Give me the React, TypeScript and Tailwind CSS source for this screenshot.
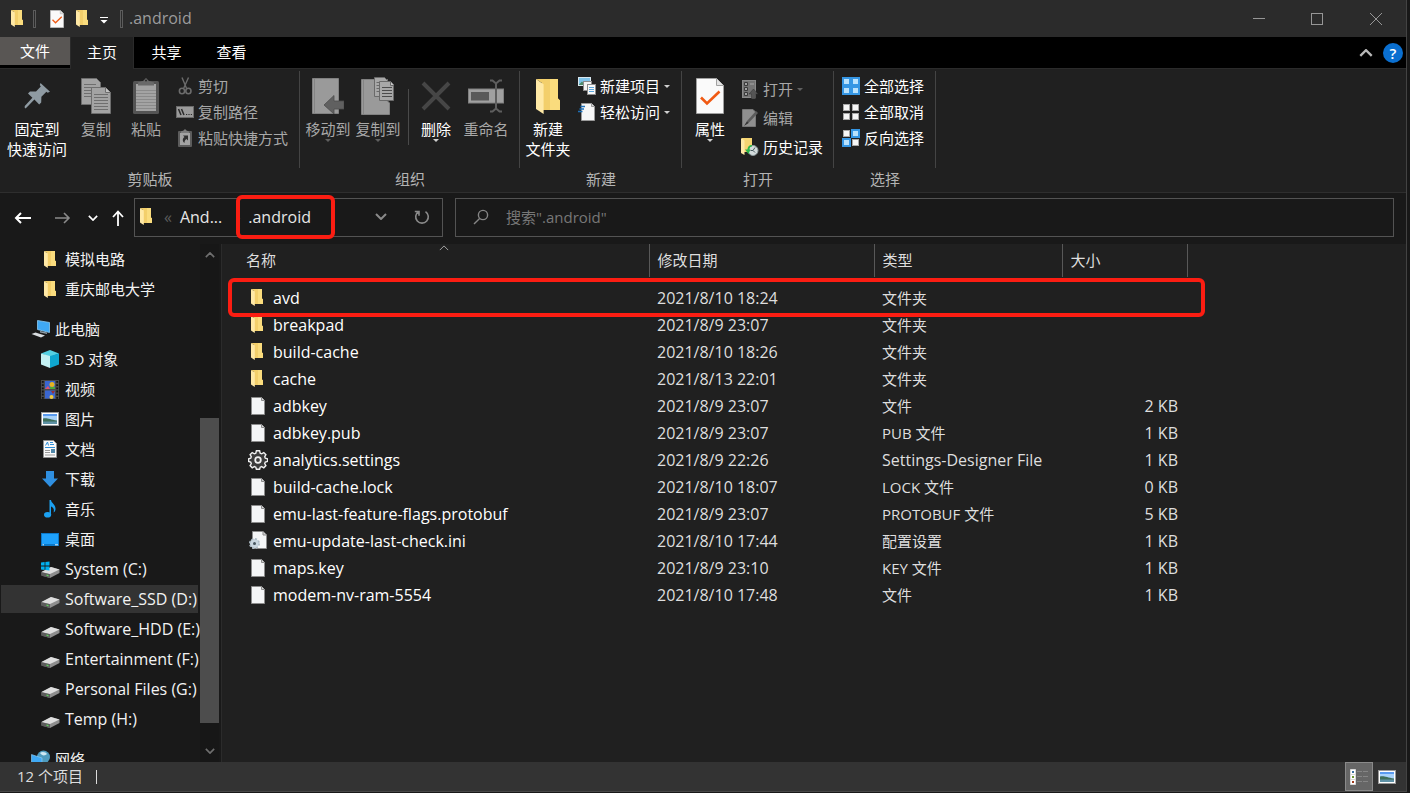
import type { ReactNode } from "react";

type IconProps = { className?: string };

// Latin-only labels are set one step larger than the Chinese ones
const labelSize = (text: string) => (/^[ -~]+$/.test(text) ? "text-[16px]" : "text-[15px]");

/* ---------- icons ---------- */

function FolderIcon({ className = "w-3 h-[17px]" }: IconProps) {
  return (
    <svg viewBox="0 0 12 17" className={className} preserveAspectRatio="none">
      <path d="M0 0H11V9.5L12 10.5V15H3V2Z" fill="#f3cf6b" />
      <path d="M7 0H11V9.5L12 10.5V15H7Z" fill="#fadc7d" />
      <path d="M0 0L3.8 2.5V17L0 14.6Z" fill="#ffe9a6" />
    </svg>
  );
}

function FileIcon({ className = "w-3.5 h-[18px]" }: IconProps) {
  return (
    <svg viewBox="0 0 14 18" className={className}>
      <path d="M0.5 0.5H10.5L13.5 3.5V17.5H0.5Z" fill="#f5f6f7" stroke="#8c8c8c" />
      <path d="M10.5 0.5V3.5H13.5" fill="#d6d6d6" stroke="#8c8c8c" />
    </svg>
  );
}

function GearIcon() {
  return (
    <svg viewBox="0 0 20 20" className="w-5 h-5" fill="none" stroke="#f0f0f0">
      <path
        d="M8.4 0.8h3.2l.6 2.4 1.4.6 2.2-1.2 2.1 2.1-1.2 2.2.6 1.3 2.3.6v2.6l-2.3.7-.6 1.4 1.2 2.1-2.1 2.2-2.2-1.2-1.4.6-.6 2.1H8.4l-.6-2.1-1.4-.6-2.2 1.2L2.100 15.600l1.200-2.100-.6-1.400-2.100-.7V8.800l2.100-.6.6-1.300L2.100 4.700l2.100-2.100 2.200 1.200 1.400-.6Z"
        strokeWidth="1.400"
        fill="#3c3c3c"
      />
      <circle cx="10" cy="10" r="2.800" strokeWidth="1.800" />
    </svg>
  );
}

function IniIcon() {
  return (
    <svg viewBox="0 0 18 19" className="w-[18px] h-[19px]">
      <path d="M3.5 0.5H14L17.5 4V17.5H3.5Z" fill="#f5f6f7" stroke="#8c8c8c" />
      <path d="M14 0.5V4H17.5" fill="#d6d6d6" stroke="#8c8c8c" />
      <circle cx="5.5" cy="12.5" r="4.6" fill="#c9d6df" stroke="#aebcc6" strokeWidth="1.8" strokeDasharray="2 1.6" />
      <circle cx="5.5" cy="12.5" r="3.8" fill="#c9d6df" />
      <circle cx="5.5" cy="12.5" r="1.5" fill="#46545e" />
    </svg>
  );
}

function PropertiesIcon({ className = "w-7 h-9" }: IconProps) {
  return (
    <svg viewBox="0 0 28 36" className={className}>
      <path d="M0.5 0.5H20.5L27.5 7.5V35.5H0.5Z" fill="#fafafa" stroke="#a0a0a0" />
      <path d="M20.5 0.5V7.5H27.5" fill="#e4e4e4" stroke="#a0a0a0" />
      <path d="M5 19.5L11 25.5L23.5 13.5" fill="none" stroke="#f05a14" strokeWidth="2.6" />
    </svg>
  );
}

function PinIcon() {
  return (
    <svg viewBox="0 0 26 26" className="w-[26px] h-[26px]" fill="#8f9ba3">
      <path d="M16.5 0L26 8.8L23.6 9.8L22.4 8.8L17.4 13.8L17.2 19.6L15.2 21.4L10.4 16.6L1.6 25.4L0.6 24.6L0.8 23L8.4 14.8L4 10.6L6 8.6L12 8.6L16.8 3.6L15.8 2Z" />
    </svg>
  );
}

function CopyIcon() {
  return (
    <svg viewBox="0 0 30 36" className="w-[30px] h-9" stroke="#6e6e6e">
      <path d="M0.5 0.5H15.5L19.5 4.5V26.5H0.5Z" fill="#a3a3a3" />
      <path d="M3 6.5H15M3 9.5H15M3 12.5H12M3 15.5H12M3 18.5H12" />
      <path d="M10.5 9.5H24.5L29.5 14.5V35.5H10.5Z" fill="#a3a3a3" />
      <path d="M24.5 9.5V14.5H29.5" fill="#c2c2c2" />
      <path d="M13 16.5H27M13 19.5H27M13 22.5H27M13 25.5H27M13 28.5H27M13 31.5H27" />
    </svg>
  );
}

function PasteIcon() {
  return (
    <svg viewBox="0 0 26 36" className="w-[26px] h-9">
      <rect x="0" y="3" width="26" height="33" rx="1.5" fill="#545454" />
      <rect x="3" y="6" width="20" height="27" fill="#a3a3a3" />
      <path d="M3 12.5H23M3 15.5H23M3 18.5H23M3 21.5H23M3 24.5H23M3 27.5H23M3 30.5H23" stroke="#8a8a8a" />
      <path d="M5 7.5V4.5L10 3L13 0L16 3L21 4.5V7.5Z" fill="#6a6a6a" />
      <circle cx="13" cy="2.6" r="1" fill="#2a2a2a" />
    </svg>
  );
}

function ScissorsIcon() {
  return (
    <svg viewBox="0 0 18 18" className="w-[18px] h-[18px]" fill="none" stroke="#6c6c6c">
      <path d="M6 0.5L10.6 11.5M12.5 0.5L7.6 11.5" strokeWidth="1.4" />
      <ellipse cx="6" cy="14" rx="2.6" ry="2.8" strokeWidth="1.6" />
      <ellipse cx="12.4" cy="14" rx="2.6" ry="2.8" strokeWidth="1.6" />
    </svg>
  );
}

function CopyPathIcon() {
  return (
    <svg viewBox="0 0 18 12" className="w-[18px] h-3">
      <rect x="0.5" y="0.5" width="17" height="11" fill="#9b9b9b" stroke="#6c6c6c" />
      <path d="M2.5 3L5 9M5.5 3L8 9" stroke="#2c2c2c" strokeWidth="1.5" />
      <path d="M10 8.5h1.2M12.4 8.5h1.2M14.8 8.5h1.2" stroke="#2c2c2c" />
    </svg>
  );
}

function PasteShortcutIcon() {
  return (
    <svg viewBox="0 0 14 18" className="w-3.5 h-[18px]">
      <rect y="2" width="14" height="16" rx="1" fill="#5c5c5c" />
      <rect x="2" y="4" width="10" height="12" fill="#a3a3a3" />
      <path d="M3 4V2.5L5.5 1.5L7 0L8.5 1.5L11 2.5V4Z" fill="#7b7b7b" />
      <path d="M5 6.5H10V11.5L8.5 10C7 11 6.5 12 6.5 14C4 12 4.5 9.5 6.5 8Z" fill="#2f2f2f" />
    </svg>
  );
}

function MoveToIcon() {
  return (
    <svg viewBox="0 0 32 36" className="w-8 h-9">
      <path d="M0.5 0.5H26.5V35.5H0.5Z" fill="#9a9a9a" stroke="#818181" />
      <path d="M2.5 1V35" stroke="#858585" />
      <path d="M12 27L22 17.5V23H32V31H22V36Z" fill="#606060" stroke="#4c4c4c" strokeWidth="0.8" />
    </svg>
  );
}

function CopyToIcon() {
  return (
    <svg viewBox="0 0 34 38" className="w-[34px] h-[38px]">
      <path d="M0.5 2.5H26.5V24L28.5 26V37.5H0.5Z" fill="#9a9a9a" stroke="#818181" />
      <path d="M2.5 3V37" stroke="#858585" />
      <g stroke="#6a6a6a">
        <path d="M13.5 0.5H23.5L26.5 3.5V19.5H13.5Z" fill="#a8a8a8" />
        <path d="M15.5 5.5H23M15.5 8.5H23M15.5 11.5H20M15.5 14.5H20" />
        <path d="M18.5 4.5H29.5L32.5 7.5V23.5H18.5Z" fill="#a8a8a8" />
        <path d="M29.5 4.5V8.5H33" fill="#c8c8c8" />
        <path d="M21 10.5H31M21 13.5H31M21 16.5H31M21 19.5H31" stroke="#4c4c4c" />
      </g>
    </svg>
  );
}

function DeleteIcon() {
  return (
    <svg viewBox="0 0 30 30" className="w-[30px] h-[30px]">
      <path d="M2 2L28 28M28 2L2 28" stroke="#464646" strokeWidth="4" />
    </svg>
  );
}

function RenameIcon() {
  return (
    <svg viewBox="0 0 36 34" className="w-9 h-[34px]" fill="none">
      <rect x="0.5" y="10" width="35" height="14" fill="#a0a0a0" stroke="#808080" />
      <rect x="3" y="13" width="18" height="8.5" fill="#595959" />
      <path d="M22 1.5H24.5L28 4.5L31.5 1.5H34M28 4.5V29.5M22 32.5H24.5L28 29.5L31.5 32.5H34" stroke="#5e5e5e" strokeWidth="2" />
    </svg>
  );
}

function NewItemIcon() {
  return (
    <svg viewBox="0 0 18 18" className="w-[18px] h-[18px]">
      <rect x="0.5" y="0.5" width="12" height="8" fill="#7fc3ea" stroke="#d9e8f0" />
      <path d="M1 7.5L4 4.5L6 6.5L9 5V8H1Z" fill="#4d8b6c" />
      <rect x="5.5" y="4.5" width="8" height="9" fill="#f4f4f4" stroke="#8c8c8c" />
      <rect x="9.5" y="7.5" width="8" height="10" fill="#f8f8f8" stroke="#8c8c8c" />
      <path d="M11 10.5H16M11 12.5H16M11 14.5H16" stroke="#5aa6dc" />
    </svg>
  );
}

function EasyAccessIcon() {
  return (
    <svg viewBox="0 0 18 18" className="w-[18px] h-[18px]">
      <path d="M3.5 0.5H13.5L16.5 3.5V17.5H3.5Z" fill="#f6f6f6" stroke="#9a9a9a" />
      <path d="M13.5 0.5V3.5H16.5" fill="#d6d6d6" stroke="#9a9a9a" />
      <path d="M2.5 3.5H7M1.5 6H6M0 8.5H4.5" stroke="#1d6fb8" strokeWidth="1.3" />
    </svg>
  );
}

function OpenIcon() {
  return (
    <svg viewBox="0 0 16 19" className="w-4 h-[19px]">
      <rect x="0.5" y="0.5" width="13" height="17" fill="#757575" stroke="#8a8a8a" />
      <path d="M2.5 2.5H5.5V5.5H2.5ZM2.5 7.5H5.5V10.5H2.5ZM2.5 12.5H5.5V15.5H2.5Z" fill="#a2a2a2" stroke="#3a3a3a" />
      <path d="M8 4H12" stroke="#a8a8a8" />
      <path d="M11.5 9L16 14H13.5V19H9.5V14H7Z" fill="#555" stroke="#333" strokeWidth="0.5" />
    </svg>
  );
}

function EditIcon() {
  return (
    <svg viewBox="0 0 16 18" className="w-4 h-[18px]">
      <path d="M0.5 0.5H11L13.5 3V17.5H0.5Z" fill="#8f8f8f" stroke="#777" />
      <path d="M3 16L5 12L14 2L16 4L6.5 14Z" fill="#5b5b5b" />
      <path d="M2 17L5 12.5L6.5 14Z" fill="#333" />
    </svg>
  );
}

function HistoryIcon() {
  return (
    <svg viewBox="0 0 18 18" className="w-[18px] h-[18px]">
      <path d="M1 0H11V14H1Z" fill="#f6d572" />
      <path d="M0 0L3.5 2.5V17L0 15Z" fill="#ffe9a6" />
      <circle cx="12" cy="12.5" r="5" fill="#d3dbdc" stroke="#8c9a9c" />
      <path d="M12 12.5L14 9.5M12 12.5H9.5M12 12.5L14 14.5" stroke="#45575c" />
      <path d="M11 7C8 7 6.500 9 6.500 11.500H4L7.500 16L9.500 11.500H8.500C8.500 9.500 9.500 8.500 11 8.500Z" fill="#2db84b" />
    </svg>
  );
}

// mode decides which tiles are drawn as ticked (blue)
function SelectIcon({ mode }: { mode: "all" | "none" | "invert" }) {
  const tiles = [
    { x: 0, y: 0, on: mode === "all" },
    { x: 9, y: 0, on: mode !== "none" },
    { x: 0, y: 9, on: mode !== "none" },
    { x: 9, y: 9, on: mode === "all" },
  ];
  return (
    <svg viewBox="0 0 18 18" className="w-[18px] h-[18px]">
      {tiles.map((t) =>
        t.on ? (
          <rect key={`${t.x}-${t.y}`} x={t.x + 1} y={t.y + 1} width="7" height="7" fill="#b9e2fd" stroke="#3596e4" strokeWidth="2" />
        ) : (
          <rect key={`${t.x}-${t.y}`} x={t.x + 1.5} y={t.y + 1.5} width="6" height="6" fill="#f7f7f7" stroke="#a8a8a8" />
        )
      )}
    </svg>
  );
}

function PcIcon() {
  return (
    <svg viewBox="0 0 20 18" className="w-5 h-[18px]">
      <path d="M6.5 0.5L18.5 2.5V12.5L6.5 9.5Z" fill="#3fa9f5" stroke="#8ccaf2" strokeWidth="0.8" />
      <path d="M9 11L16 12.5V14L9 12.5Z" fill="#8d9aa3" />
      <path d="M0.5 14L4.5 12.5L14 15.5L10 17.5Z" fill="#d9dde0" />
    </svg>
  );
}

function CubeIcon() {
  return (
    <svg viewBox="0 0 18 18" className="w-[18px] h-[18px]">
      <path d="M9 0L18 3.5L9 7L0 3.5Z" fill="#55d0e2" />
      <path d="M0 3.5L9 6V18L0 14.5Z" fill="#c4f1f3" />
      <path d="M18 3.5L9 6V18L18 14.5Z" fill="#0fa6cf" />
    </svg>
  );
}

function VideoIcon() {
  return (
    <svg viewBox="0 0 18 19" className="w-[18px] h-[19px]">
      <rect width="18" height="19" fill="#4a4a4a" />
      <path d="M1.8 1V19M16.2 1V19" stroke="#111" strokeWidth="1.8" strokeDasharray="1.8 1.4" />
      <rect x="4" y="1" width="10" height="8" fill="#3a66d0" />
      <rect x="4" y="10.5" width="10" height="8" fill="#3a66d0" />
      <path d="M4 9L7 6L9 9Z" fill="#e0526a" />
      <circle cx="11" cy="4.5" r="2.5" fill="#e6b422" />
      <path d="M9 7H14V9H9Z" fill="#4aa83c" />
      <circle cx="10.5" cy="17" r="2" fill="#f1c93b" />
      <path d="M10 11H14L12 14Z" fill="#9b2f35" />
    </svg>
  );
}

function PictureIcon() {
  return (
    <svg viewBox="0 0 18 14" className="w-[18px] h-3.5">
      <rect x="0.5" y="0.5" width="17" height="13" fill="#fff" stroke="#9a9a9a" />
      <rect x="2" y="2" width="14" height="10" fill="#a9d3fb" />
      <path d="M2 2H16V4H2Z" fill="#5a9bf0" />
      <path d="M2 6.5C6 5.5 9 7.5 16 8.5V10H2Z" fill="#3f6f5a" />
      <path d="M2 9.5H16V12H2Z" fill="#5f92a6" />
    </svg>
  );
}

function DocumentIcon() {
  return (
    <svg viewBox="0 0 14 18" className="w-3.5 h-[18px]">
      <path d="M0.5 0.5H10.5L13.5 3.5V17.5H0.5Z" fill="#fafafa" stroke="#909090" />
      <path d="M2.5 5.5L4.5 2L5.5 5.5M7 2.5H10M7 4.5H11M2 7.5H12" stroke="#2f8fd8" fill="none" />
      <path d="M2 10.5H7M2 12.5H7M2 15H12" stroke="#9a9a9a" />
      <rect x="8" y="9" width="4" height="4" fill="#4f86a8" />
    </svg>
  );
}

function DownloadIcon() {
  return (
    <svg viewBox="0 0 16 16" className="w-4 h-4">
      <path d="M4 0H12V7.5H16L8 16L0 7.5H4Z" fill="#2f8fe0" />
    </svg>
  );
}

function MusicIcon() {
  return (
    <svg viewBox="0 0 12 18" className="w-3 h-[18px]" fill="#1ba1f2">
      <path d="M5.5 0H7C7.5 3.5 12 4.5 11.5 9.5C11.3 11 10.5 12 9.5 12.5C10.5 9.5 9.5 7.5 7 6.5V14.5H5.5Z" />
      <ellipse cx="3.6" cy="14.8" rx="3.6" ry="2.8" />
    </svg>
  );
}

function DesktopIcon() {
  return (
    <svg viewBox="0 0 18 13" className="w-[18px] h-[13px]">
      <rect width="18" height="13" fill="#0b78c8" />
      <rect x="1" y="1" width="16" height="10" fill="#1ea0fa" />
      <path d="M1.5 11.8H3M14 11.8H17" stroke="#e6f4ff" />
    </svg>
  );
}

function DriveIcon({ system = false }: { system?: boolean }) {
  return (
    <svg viewBox="0 0 19 18" className="w-[19px] h-[18px]">
      <path d="M0.5 12L10 7L18.5 9.5V13L9 18L0.5 15.5Z" fill="#8e8e8e" />
      <path d="M0.5 12L10 7L18.5 9.5L9 14Z" fill="#dedede" />
      <path d="M0.5 12.2L9 14.2V18L0.5 15.8Z" fill="#5c5c5c" />
      <path d="M5.5 14.4L7.5 15V16.4L5.500 15.800Z" fill="#5fd35f" />
      {system && <path d="M0 2.5L3.600 2V5.600H0ZM4.400 2L8.500 1.500V5.600H4.400ZM0 6.400H3.600V10L0 9.500ZM4.400 6.400H8.500V10.500L4.400 10Z" fill="#00b0f0" />}
    </svg>
  );
}

function NetworkIcon() {
  return (
    <svg viewBox="0 0 20 18" className="w-5 h-[18px]">
      <circle cx="12.5" cy="7" r="6.5" fill="#4f9bbd" />
      <path d="M9 3C11 1 15 2 16 4C14 6 11 6 9 3Z" fill="#cfe8f2" />
      <path d="M0.5 4.5L11 8V17L0.5 15Z" fill="#3fa9f5" stroke="#9bd2f5" strokeWidth="0.6" />
    </svg>
  );
}

function Chevron({ className, dir = "down", thin }: { className: string; dir?: "up" | "down"; thin?: boolean }) {
  return (
    <svg viewBox="0 0 12 7" className={className} fill="none" stroke="currentColor">
      <path d={dir === "down" ? "M1 1L6 6L11 1" : "M1 6L6 1L11 6"} strokeWidth={thin ? 1.2 : 2} />
    </svg>
  );
}

function Caret({ className = "text-[#d0d0d0]" }: IconProps) {
  return (
    <svg viewBox="0 0 6 3" className={`w-1.5 h-[3px] shrink-0 ${className}`}>
      <path d="M0 0H6L3 3Z" fill="currentColor" />
    </svg>
  );
}

/* ---------- ribbon ---------- */

function RibbonGroup({ title, children }: { title: string; children: ReactNode }) {
  return (
    <section className="flex flex-col shrink-0 pt-0.5">
      <div className="flex h-[97px] pl-[3px] pr-2 pt-0.5 border-r border-[#444]">{children}</div>
      <h2 className="h-[23px] text-center leading-[23px] text-[#b4b4b4]">{title}</h2>
    </section>
  );
}

type BigButtonProps = {
  icon: ReactNode;
  label: string;
  second?: string;
  caret?: boolean;
  dim?: boolean;
  wide?: boolean;
};

function BigButton({ icon, label, second, caret, dim, wide }: BigButtonProps) {
  return (
    <button
      className={`flex flex-col items-center shrink-0 leading-5 whitespace-nowrap ${wide ? "w-[68px]" : "w-[50px]"} ${
        dim ? "text-[#a8a8a8]" : "text-white"
      }`}
    >
      <span className="h-[46px] flex items-center justify-center">{icon}</span>
      <span>{label}</span>
      {second && <span>{second}</span>}
      {caret && <Caret className={dim ? "text-[#606060]" : "text-[#d0d0d0]"} />}
    </button>
  );
}

type SmallButtonProps = { icon: ReactNode; label: string; caret?: boolean; dim?: boolean };

function SmallButton({ icon, label, caret, dim }: SmallButtonProps) {
  return (
    <button className={`flex items-center gap-1 h-[26px] whitespace-nowrap ${dim ? "text-[#a8a8a8]" : "text-white"}`}>
      <span className="w-[18px] flex justify-center">{icon}</span>
      <span>{label}</span>
      {caret && <Caret className={dim ? "text-[#606060]" : "text-[#d0d0d0]"} />}
    </button>
  );
}

function Ribbon() {
  return (
    <div className="flex h-[124px] shrink-0 bg-[#202020] border-b border-[#2e2e2e] overflow-hidden">
      <RibbonGroup title="剪贴板">
        <BigButton icon={<PinIcon />} label="固定到" second="快速访问" wide />
        <BigButton icon={<CopyIcon />} label="复制" dim />
        <BigButton icon={<PasteIcon />} label="粘贴" dim />
        <div className="flex flex-col pl-[5px] pr-[3px]">
          <SmallButton icon={<ScissorsIcon />} label="剪切" dim />
          <SmallButton icon={<CopyPathIcon />} label="复制路径" dim />
          <SmallButton icon={<PasteShortcutIcon />} label="粘贴快捷方式" dim />
        </div>
      </RibbonGroup>

      <RibbonGroup title="组织">
        <BigButton icon={<MoveToIcon />} label="移动到" caret dim />
        <BigButton icon={<CopyToIcon />} label="复制到" caret dim />
        <div className="w-px h-14 mt-4 ml-[5px] mr-0.5 bg-[#4a4a4a]" />
        <BigButton icon={<DeleteIcon />} label="删除" caret />
        <BigButton icon={<RenameIcon />} label="重命名" dim />
      </RibbonGroup>

      <RibbonGroup title="新建">
        <BigButton icon={<FolderIcon className="w-6 h-[35px]" />} label="新建" second="文件夹" />
        <div className="flex flex-col pl-[5px] pr-[3px]">
          <SmallButton icon={<NewItemIcon />} label="新建项目" caret />
          <SmallButton icon={<EasyAccessIcon />} label="轻松访问" caret />
        </div>
      </RibbonGroup>

      <RibbonGroup title="打开">
        <BigButton icon={<PropertiesIcon />} label="属性" caret />
        <div className="flex flex-col gap-[3px] pl-1.5 pr-0.5 pt-[3px]">
          <SmallButton icon={<OpenIcon />} label="打开" caret dim />
          <SmallButton icon={<EditIcon />} label="编辑" dim />
          <SmallButton icon={<HistoryIcon />} label="历史记录" />
        </div>
      </RibbonGroup>

      <RibbonGroup title="选择">
        <div className="flex flex-col pl-[5px] pr-[3px]">
          <SmallButton icon={<SelectIcon mode="all" />} label="全部选择" />
          <SmallButton icon={<SelectIcon mode="none" />} label="全部取消" />
          <SmallButton icon={<SelectIcon mode="invert" />} label="反向选择" />
        </div>
      </RibbonGroup>
    </div>
  );
}

/* ---------- bars ---------- */

function TitleBar() {
  return (
    <header className="flex items-center h-[37px] shrink-0 pl-[11px] bg-[#2b2b2b]">
      <FolderIcon />
      <span className="w-[3px] h-[18px] ml-2.5 border border-[#5c5c5c]" />
      <button aria-label="属性" className="ml-3.5">
        <PropertiesIcon className="w-3.5 h-[18px]" />
      </button>
      <button aria-label="新建文件夹" className="ml-3">
        <FolderIcon />
      </button>
      <button aria-label="自定义快速访问工具栏" className="ml-3 mt-1">
        <svg viewBox="0 0 8 7" className="w-2 h-[7px]">
          <path d="M0 0.5H8" stroke="#fff" />
          <path d="M0.5 3H7.5L4 6.5Z" fill="#fff" />
        </svg>
      </button>
      <span className="w-[3px] h-[18px] ml-3 border border-[#5c5c5c]" />
      <h1 className="ml-1.5 pb-0.5 text-[16px] text-[#9c9c9c]">.android</h1>
      <div className="flex ml-auto h-full text-[#969696]">
        <button aria-label="最小化" className="w-[58px] flex items-center justify-center">
          <svg viewBox="0 0 12 12" className="w-3 h-3" stroke="currentColor">
            <path d="M0 5.5H12" />
          </svg>
        </button>
        <button aria-label="最大化" className="w-[58px] flex items-center justify-center">
          <svg viewBox="0 0 12 12" className="w-3 h-3" stroke="currentColor" fill="none">
            <rect x="0.5" y="0.5" width="11" height="11" />
          </svg>
        </button>
        <button aria-label="关闭" className="w-[60px] flex items-center justify-center">
          <svg viewBox="0 0 12 12" className="w-3 h-3" stroke="currentColor">
            <path d="M0 0L12 12M12 0L0 12" />
          </svg>
        </button>
      </div>
    </header>
  );
}

function TabBar() {
  return (
    <nav className="flex h-8 shrink-0 bg-black border-b border-[#2b2b2b] text-white">
      <button className="w-[70px] h-7 bg-[#595654]">文件</button>
      <button className="w-16 h-8 pb-0.5 bg-[#202020] border-x border-[#2b2b2b]">主页</button>
      <button className="w-[65px] pb-0.5">共享</button>
      <button className="w-[65px] pb-0.5">查看</button>
      <div className="flex items-center gap-2.5 ml-auto pr-[3px]">
        <button aria-label="最小化功能区" className="text-[#b8b8b8]">
          <Chevron dir="up" className="w-3.5 h-2" />
        </button>
        <button
          aria-label="帮助"
          className="w-5 h-5 rounded-full bg-[#0a6fd0] text-white font-semibold leading-5"
        >
          ?
        </button>
      </div>
    </nav>
  );
}

function AddressBar() {
  return (
    <div className="flex items-center h-[51px] shrink-0 pl-3.5 pr-3 pb-0.5 bg-[#191919]">
      <button aria-label="返回" className="text-white">
        <svg viewBox="0 0 18 12" className="w-[18px] h-3" fill="none" stroke="currentColor" strokeWidth="2">
          <path d="M7 1L2 6L7 11M2 6H17" />
        </svg>
      </button>
      <button aria-label="前进" className="ml-[22px] text-[#8a8a8a]">
        <svg viewBox="0 0 18 12" className="w-[18px] h-3" fill="none" stroke="currentColor" strokeWidth="1.6">
          <path d="M10 1L15 6L10 11M15 6H1" />
        </svg>
      </button>
      <button aria-label="最近浏览的位置" className="ml-4 text-white">
        <Chevron className="w-2.5 h-1.5" />
      </button>
      <button aria-label="上移" className="ml-3.5 mr-2.5 text-white">
        <svg viewBox="0 0 12 16" className="w-3 h-4" fill="none" stroke="currentColor" strokeWidth="1.8">
          <path d="M1 7L6 1.5L11 7M6 1.5V16" />
        </svg>
      </button>

      <div className="flex items-center w-[309px] h-[39px] shrink-0 pl-[5px] pb-0.5 border border-[#535353] text-[16px] text-[#e6e6e6]">
        <FolderIcon />
        <span className="ml-3 text-[#5c5c5c]">«</span>
        <a href="#android-parent" className="ml-2">And...</a>
        <span className="w-5 ml-1.5 text-[#5c5c5c] text-center">›</span>
        <a href="#android" className="relative">
          .android
          {/* red marker around the current folder */}
          <span className="absolute -inset-x-3 -inset-y-3 -right-6 border-4 border-[#fb1d12] rounded-md pointer-events-none" />
        </a>
        <button aria-label="以前的位置" className="ml-auto text-[#8a8a8a]">
          <Chevron className="w-3 h-[7px]" />
        </button>
        <button aria-label="刷新" className="flex items-center justify-center w-[41px] h-full ml-3.5 text-[#8a8a8a]">
          <svg viewBox="0 0 16 16" className="w-4 h-4" fill="none" stroke="currentColor" strokeWidth="1.6">
            <path d="M11.5 2.6A6.3 6.3 0 1 1 4.5 2.6M0.8 2.5H5V6.7" />
          </svg>
        </button>
      </div>

      <label className="flex items-center flex-1 h-[39px] ml-3 pl-4 pb-0.5 border border-[#535353]">
        <svg viewBox="0 0 18 18" className="w-[18px] h-[18px]" fill="none" stroke="#858585" strokeWidth="1.4">
          <circle cx="11" cy="7" r="4.6" />
          <path d="M7.6 10.4L2 16" />
        </svg>
        <input
          type="text"
          aria-label="搜索"
          placeholder={'搜索".android"'}
          className="flex-1 min-w-0 ml-4 bg-transparent outline-none placeholder:text-[#777]"
        />
      </label>
    </div>
  );
}

/* ---------- sidebar ---------- */

const quickAccess = ["模拟电路", "重庆邮电大学"];

const computerItems = [
  { label: "3D 对象", icon: <CubeIcon /> },
  { label: "视频", icon: <VideoIcon /> },
  { label: "图片", icon: <PictureIcon /> },
  { label: "文档", icon: <DocumentIcon /> },
  { label: "下载", icon: <DownloadIcon /> },
  { label: "音乐", icon: <MusicIcon /> },
  { label: "桌面", icon: <DesktopIcon /> },
  { label: "System (C:)", icon: <DriveIcon system /> },
  { label: "Software_SSD (D:)", icon: <DriveIcon />, active: true },
  { label: "Software_HDD (E:)", icon: <DriveIcon /> },
  { label: "Entertainment (F:)", icon: <DriveIcon /> },
  { label: "Personal Files (G:)", icon: <DriveIcon /> },
  { label: "Temp (H:)", icon: <DriveIcon /> },
];

type TreeItemProps = { icon: ReactNode; label: string; root?: boolean; active?: boolean };

function TreeItem({ icon, label, root, active }: TreeItemProps) {
  return (
    <li className="py-px pl-px pr-0.5">
      <a
        href={`#${label}`}
        className={`flex items-center h-7 whitespace-nowrap ${root ? "gap-1 pl-[30px]" : "gap-[5px] pl-[39px]"} ${
          active ? "bg-[#333]" : ""
        }`}
      >
        <span className="w-5 shrink-0 flex justify-center">{icon}</span>
        <span className={labelSize(label)}>{label}</span>
      </a>
    </li>
  );
}

function Sidebar() {
  return (
    <aside className="flex w-[222px] shrink-0 bg-[#191919] text-[#f2f2f2] border-r border-[#2b2b2b] overflow-hidden">
      <div className="flex-1 min-w-0">
        <ul>
          {quickAccess.map((label) => (
            <TreeItem key={label} icon={<FolderIcon />} label={label} />
          ))}
        </ul>
        <ul className="mt-2.5">
          <TreeItem icon={<PcIcon />} label="此电脑" root />
          {computerItems.map((item) => (
            <TreeItem key={item.label} {...item} />
          ))}
        </ul>
        <ul className="mt-2.5">
          <TreeItem icon={<NetworkIcon />} label="网络" root />
        </ul>
      </div>
      <div className="flex flex-col w-[19px] mr-0.5 bg-[#171717] text-[#6e6e6e]">
        <button aria-label="向上滚动" className="h-[22px] flex items-center justify-center">
          <Chevron dir="up" className="w-2.5 h-1.5" />
        </button>
        <div className="flex-[152]" />
        <div className="flex-[305] bg-[#4d4d4d]" />
        <div className="flex-[17]" />
        <button aria-label="向下滚动" className="h-[22px] flex items-center justify-center">
          <Chevron className="w-2.5 h-1.5" />
        </button>
      </div>
    </aside>
  );
}

/* ---------- file list ---------- */

type FileRow = {
  name: string;
  date: string;
  type: string;
  size?: string;
  kind: "folder" | "file" | "gear" | "ini";
};

const files: FileRow[] = [
  { name: "avd", date: "2021/8/10 18:24", type: "文件夹", kind: "folder" },
  { name: "breakpad", date: "2021/8/9 23:07", type: "文件夹", kind: "folder" },
  { name: "build-cache", date: "2021/8/10 18:26", type: "文件夹", kind: "folder" },
  { name: "cache", date: "2021/8/13 22:01", type: "文件夹", kind: "folder" },
  { name: "adbkey", date: "2021/8/9 23:07", type: "文件", size: "2 KB", kind: "file" },
  { name: "adbkey.pub", date: "2021/8/9 23:07", type: "PUB 文件", size: "1 KB", kind: "file" },
  { name: "analytics.settings", date: "2021/8/9 22:26", type: "Settings-Designer File", size: "1 KB", kind: "gear" },
  { name: "build-cache.lock", date: "2021/8/10 18:07", type: "LOCK 文件", size: "0 KB", kind: "file" },
  { name: "emu-last-feature-flags.protobuf", date: "2021/8/9 23:07", type: "PROTOBUF 文件", size: "5 KB", kind: "file" },
  { name: "emu-update-last-check.ini", date: "2021/8/10 17:44", type: "配置设置", size: "1 KB", kind: "ini" },
  { name: "maps.key", date: "2021/8/9 23:10", type: "KEY 文件", size: "1 KB", kind: "file" },
  { name: "modem-nv-ram-5554", date: "2021/8/10 17:48", type: "文件", size: "1 KB", kind: "file" },
];

const kindIcons = {
  folder: <FolderIcon />,
  file: <FileIcon />,
  gear: <GearIcon />,
  ini: <IniIcon />,
};

function FileList() {
  return (
    <main className="relative flex-1 min-w-0 bg-[#202020] overflow-hidden">
      <table className="table-fixed w-[965px] border-collapse text-left">
        <colgroup>
          <col className="w-[427px]" />
          <col className="w-[225px]" />
          <col className="w-[188px]" />
          <col className="w-[125px]" />
        </colgroup>
        <thead className="text-[#dedede]">
          <tr className="h-[33px]">
            <th className="relative pl-6 pb-0.5 font-normal border-r border-[#585858]">
              名称
              <span className="absolute left-1/2 top-0 ml-1 flex pt-px text-[#a0a0a0]">
                <Chevron dir="up" className="w-2.5 h-1.5" thin />
              </span>
            </th>
            <th className="pl-2 pb-0.5 font-normal border-r border-[#585858]">修改日期</th>
            <th className="pl-2 pb-0.5 font-normal border-r border-[#585858]">类型</th>
            <th className="pl-2 pb-0.5 font-normal border-r border-[#585858]">大小</th>
          </tr>
        </thead>
        <tbody className="before:block before:h-[7px] text-[#dedede]">
          {files.map((file) => (
            <tr key={file.name} className="h-[27px] whitespace-nowrap">
              <td className="pl-[26px] text-white">
                <div className="flex items-center gap-[5px] text-[16px]">
                  <span className={`w-5 flex ${file.kind === "folder" ? "pl-[3px]" : "justify-center"}`}>
                    {kindIcons[file.kind]}
                  </span>
                  {file.name}
                </div>
              </td>
              <td className="pl-2 text-[16px]">{file.date}</td>
              <td className={`pl-2 ${labelSize(file.type)}`}>{file.type}</td>
              <td className="pr-[9px] text-right text-[16px]">{file.size}</td>
            </tr>
          ))}
        </tbody>
      </table>
      {/* red marker around the first row */}
      <div className="absolute left-1.5 top-[34px] w-[977px] h-[39px] border-4 border-[#fb1d12] rounded-md pointer-events-none" />
    </main>
  );
}

function StatusBar() {
  return (
    <footer className="flex items-center h-[30px] shrink-0 pl-[17px] bg-[#333] border-b border-[#474747] text-[#dcdcdc]">
      <span className="pb-0.5">12 个项目</span>
      <span className="w-px h-3.5 ml-[13px] bg-[#dcdcdc]" />
      <div className="flex items-center gap-[5px] ml-auto pr-2.5">
        <button aria-label="详细信息" className="flex items-center justify-center w-7 h-[29px] bg-[#666] border border-[#8a8a8a]">
          <svg viewBox="0 0 18 16" className="w-[18px] h-4">
            <path d="M0.5 0.5H5.5V5.5H0.5ZM0.5 5.5H5.5V10.5H0.5ZM0.5 10.5H5.5V15.5H0.5Z" fill="#fff" stroke="#d8d8d8" />
            <rect x="2" y="2" width="2" height="2" fill="#3b6fa0" />
            <rect x="2" y="7" width="2" height="2" fill="#6b9430" />
            <rect x="2" y="12" width="2" height="2" fill="#a03a1c" />
            <path d="M7 2.5H12M13 2.5H18M7 7.5H12M13 7.5H18M7 12.5H12M13 12.5H18" stroke="#858585" />
          </svg>
        </button>
        <button aria-label="大图标">
          <PictureIcon />
        </button>
      </div>
    </footer>
  );
}

export default function App() {
  return (
    <div className="h-screen pr-[3px] pb-px bg-[#181818] font-['Open_Sans','Noto_Sans_CJK_SC',sans-serif] text-[15px] leading-5">
      <div className="flex flex-col h-full border-r border-[#434343]">
        <TitleBar />
        <TabBar />
        <Ribbon />
        <AddressBar />
        <div className="flex flex-1 min-h-0">
          <Sidebar />
          <FileList />
        </div>
        <StatusBar />
      </div>
    </div>
  );
}
